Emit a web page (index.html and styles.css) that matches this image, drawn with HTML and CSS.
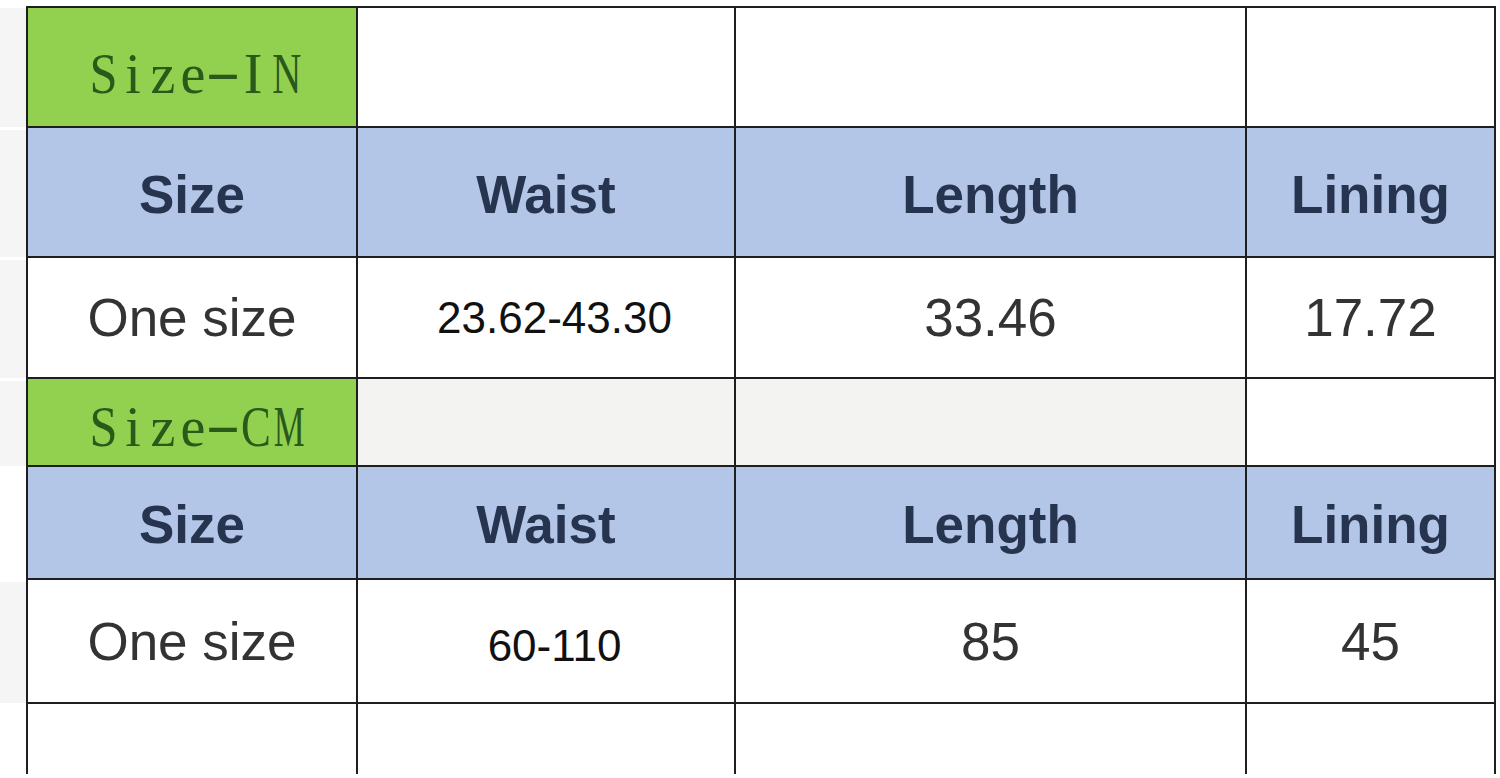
FILE: index.html
```html
<!DOCTYPE html>
<html lang="en">
<head>
<meta charset="utf-8">
<title>Size chart</title>
<link rel="stylesheet" href="styles.css">
</head>
<body>
<div class="page">
  <div class="sheet">
    <div class="gutter"></div>
    <div class="cell first top label"><span class="ch s">S</span><span class="ch">i</span><span class="ch">z</span><span class="ch">e</span><span class="ch dash">-</span><span class="ch">I</span><span class="ch n">N</span></div>
    <div class="cell top"></div>
    <div class="cell top"></div>
    <div class="cell top"></div>

    <div class="gutter"></div>
    <div class="cell first head">Size</div>
    <div class="cell head">Waist</div>
    <div class="cell head">Length</div>
    <div class="cell head">Lining</div>

    <div class="gutter"></div>
    <div class="cell first val">One size</div>
    <div class="cell val small">23.62-43.30</div>
    <div class="cell val">33.46</div>
    <div class="cell val">17.72</div>

    <div class="gutter"></div>
    <div class="cell first label label-cm"><span class="ch s">S</span><span class="ch">i</span><span class="ch">z</span><span class="ch">e</span><span class="ch dash">-</span><span class="ch c">C</span><span class="ch m">M</span></div>
    <div class="cell shade"></div>
    <div class="cell shade"></div>
    <div class="cell"></div>

    <div class="gutter blank"></div>
    <div class="cell first head">Size</div>
    <div class="cell head">Waist</div>
    <div class="cell head">Length</div>
    <div class="cell head">Lining</div>

    <div class="gutter"></div>
    <div class="cell first val">One size</div>
    <div class="cell val small low">60-110</div>
    <div class="cell val">85</div>
    <div class="cell val">45</div>

    <div class="gutter blank"></div>
    <div class="cell first last"></div>
    <div class="cell last"></div>
    <div class="cell last"></div>
    <div class="cell last"></div>
  </div>
</div>
</body>
</html>
```

FILE: styles.css
```css
html, body {
  margin: 0;
  padding: 0;
  background: #ffffff;
  overflow: hidden;
}

.page {
  padding-top: 6px;
}

.sheet {
  display: grid;
  grid-template-columns: 26px 332px 378px 511px 249px;
  grid-template-rows: 122px 130px 121px 88px 113px 124px 70px;
}

.gutter {
  background: #f5f5f5;
  margin: 2px 0 1px 0;
}

.gutter.blank {
  background: #ffffff;
}

.cell {
  box-sizing: border-box;
  border-right: 2px solid #1e1e1e;
  border-bottom: 2px solid #1e1e1e;
  background: #ffffff;
  display: flex;
  align-items: center;
  justify-content: center;
  font-family: "Liberation Sans", Arial, sans-serif;
}

.cell.first {
  border-left: 2px solid #1e1e1e;
}

.cell.top {
  border-top: 2px solid #1e1e1e;
}

.cell.last {
  border-bottom: none;
}

.label {
  background: #92d050;
  color: #2a5a1a;
  font-family: "Liberation Serif", "Times New Roman", serif;
  font-size: 56px;
  padding-top: 14px;
  padding-left: 2px;
}

.label .ch {
  display: inline-block;
  width: 30px;
  text-align: center;
}

.label .s {
  transform: scaleX(0.9);
}

.label .n {
  transform: scaleX(0.72);
}

.label .c {
  transform: scaleX(0.8);
}

.label .m {
  transform: scaleX(0.62);
}

.label .dash {
  transform: scaleX(1.9) translateY(-3px);
}

.label-cm {
  padding-top: 10px;
}

.shade {
  background: #f3f3f2;
}

.head {
  background: #b4c6e7;
  color: #263450;
  font-weight: bold;
  font-size: 53px;
  padding-top: 4px;
}

.val {
  color: #333333;
  font-size: 53px;
}

.val.small {
  color: #111111;
  font-size: 44px;
  padding-left: 17px;
}

.val.low {
  padding-top: 10px;
}
```
